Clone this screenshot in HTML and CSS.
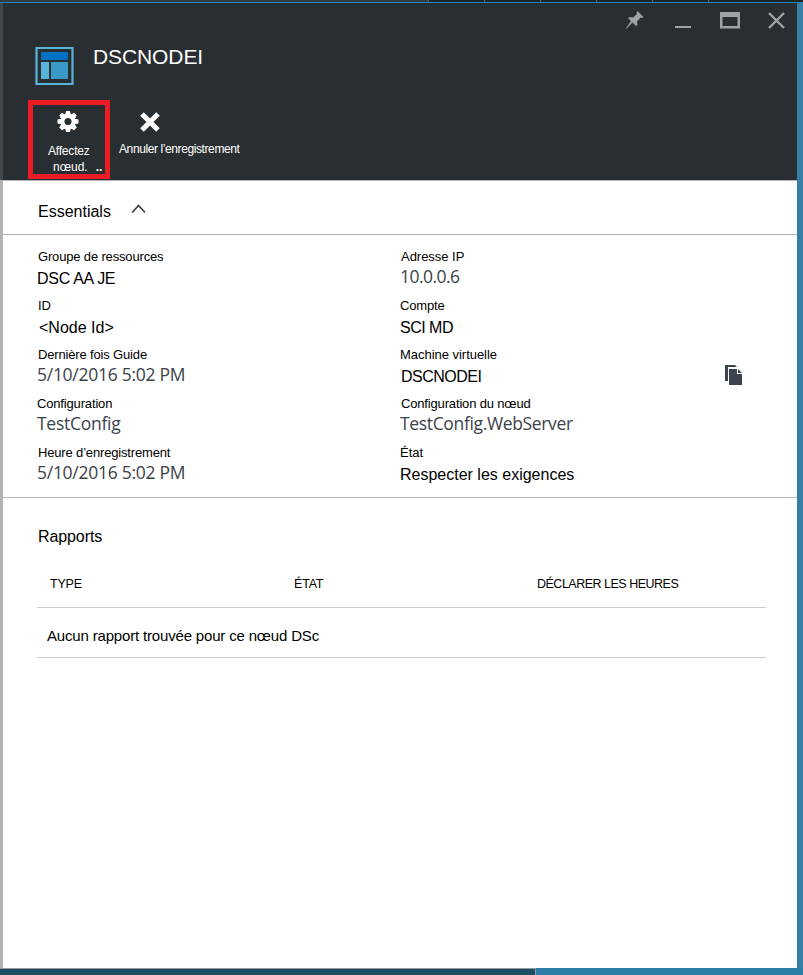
FILE: index.html
```html
<!DOCTYPE html>
<html lang="fr">
<head>
<meta charset="utf-8">
<title>DSCNODEI</title>
<link rel="stylesheet" href="styles.css">
</head>
<body>
<div class="topbar"><i class="tab wide"></i><i class="tab"></i><i class="tab"></i><i class="tab"></i><i class="tab"></i><i class="tab"></i></div>
<main class="blade">
  <header class="head">
    <div class="window-controls">
      <svg width="20" height="20" viewBox="0 0 20 20" fill="#a0a3a6"><path d="M12.500 1 18.500 7 17 8 15.500 7.500 12 11.500 12.500 15 11 16 7.500 12.500 1 19 .8 18.600 6 11 3 8 4.500 7 8 7.500 12 4 11.500 2.500Z"/></svg>
      <svg width="16" height="20" viewBox="0 0 16 20"><path d="M0 16h16v2H0z" fill="#a0a3a6"/></svg>
      <svg width="20" height="20" viewBox="0 0 20 20"><path fill="#a0a3a6" fill-rule="evenodd" d="M0 2h20v16.500H0zM2.500 7v9h15V7z"/></svg>
      <svg width="18" height="20" viewBox="0 0 18 20"><path d="M1 3 16 18M16 3 1 18" stroke="#a0a3a6" stroke-width="2.400"/></svg>
    </div>
    <div class="title-row">
      <svg class="logo" width="40" height="40" viewBox="0 0 40 40"><path d="M1.500 2h36v36h-36z" fill="none" stroke="#59b4d9" stroke-width="2.200"/><path fill="#0072c6" d="M6 6h27v8H6z"/><path fill="#59b4d9" d="M6 16h8v17H6z"/><path fill="#3999c6" d="M16 16h17v17H16z"/></svg>
      <h1>DSCNODEI</h1>
    </div>
    <div class="toolbar">
      <button class="command assign">
        <svg width="22" height="22" viewBox="-11 -11 22 22"><g fill="#fff"><path id="tooth" d="M-3-7-2-11H2L3-7V7L2 11H-2L-3 7Z"/><use href="#tooth" transform="rotate(45)"/><use href="#tooth" transform="rotate(90)"/><use href="#tooth" transform="rotate(135)"/><circle r="8"/></g><circle r="3.700" fill="#292e32"/></svg>
        <span>Affectez</span><span class="second">nœud.<b>..</b></span>
      </button>
      <button class="command remove">
        <svg width="20" height="20" viewBox="0 0 20 20"><path d="M2 2 18 18M18 2 2 18" stroke="#fff" stroke-width="5"/></svg>
        <span>Annuler l’enregistrement</span>
      </button>
    </div>
  </header>
  <section class="essentials-head"><h2>Essentials</h2>
    <svg width="16" height="10" viewBox="0 0 16 10"><path d="M1.200 8.500 7.500 1.500 14 8.500" fill="none" stroke="#3c424a" stroke-width="1.700"/></svg></section>
  <section class="essentials">
    <dl>
      <div><dt>Groupe de ressources</dt><dd class="out tight">DSC AA JE</dd></div>
      <div><dt>ID</dt><dd class="in">&lt;Node Id&gt;</dd></div>
      <div><dt>Dernière fois Guide</dt><dd class="soft">5/10/2016 5:02 PM</dd></div>
      <div><dt class="out">Configuration</dt><dd class="soft">TestConfig</dd></div>
      <div><dt>Heure d’enregistrement</dt><dd class="soft">5/10/2016 5:02 PM</dd></div>
    </dl>
    <dl>
      <div><dt class="wide">Adresse IP</dt><dd class="soft ip">10.0.0.6</dd></div>
      <div><dt class="out">Compte</dt><dd class="out tighter">SCI MD</dd></div>
      <div><dt class="out wide">Machine virtuelle</dt><dd class="tighter">DSCNODEI</dd></div>
      <div><dt>Configuration du nœud</dt><dd class="soft server">TestConfig.WebServer</dd></div>
      <div><dt class="out wide">État</dt><dd class="out">Respecter les exigences</dd></div>
    </dl>
    <svg class="copy" width="18" height="21" viewBox="0 0 18 21"><path fill="#3c424f" d="M0 0h10l2 2H3v14H0z"/><path fill="#3c424f" d="M4 4h8v5h5v11H4z"/><path fill="#3c424f" d="M13 4v4h4z"/></svg>
  </section>
  <section class="reports">
    <h2>Rapports</h2>
    <div class="thead"><span>TYPE</span><span>ÉTAT</span><span class="hours">DÉCLARER LES HEURES</span></div>
    <div class="empty">Aucun rapport trouvée pour ce nœud DSc</div>
  </section>
</main>
<footer class="bottombar"><i></i></footer>
</body>
</html>
```
FILE: styles.css
```css
* { box-sizing: border-box; }
body { margin: 0; height: 975px; overflow: hidden; display: flex; flex-direction: column; background: #3680a8; font-family: "Liberation Sans", Arial, sans-serif; color: #000; }
h1, h2, dl, dd, p { margin: 0; font-weight: 400; }
.topbar { height: 3px; flex: none; display: flex; background: #20252b; border-bottom: 1px solid #2387b8; }
.tab { width: 56px; border-right: 1px solid #555b60; }
.tab.wide { width: 429px; background: #343b40; }
.blade { width: 797px; height: 965px; border-left: 3px solid #b3b3b3; background: #fff; }
.head { height: 177px; margin-left: -3px; background: #292e32; border-left: 3px solid #42474b; }
.window-controls { height: 34px; padding: 7px 11px 0 0; display: flex; justify-content: flex-end; align-items: flex-start; }
.window-controls svg:nth-child(1) { margin-right: 30px; }
.window-controls svg:nth-child(2) { margin-right: 29px; }
.window-controls svg:nth-child(3) { margin-right: 28px; }
.title-row { height: 63px; padding: 9px 0 0 32px; display: flex; align-items: flex-start; gap: 18px; color: #fff; }
h1 { font-size: 21px; line-height: 24px; margin-top: -1px; letter-spacing: -.1px; }
.toolbar { display: flex; padding-left: 25px; }
.command { border: 0; background: none; color: #fff; font: 12px/16px "Liberation Sans", Arial, sans-serif; letter-spacing: -.2px; padding: 0; display: flex; flex-direction: column; align-items: flex-start; white-space: nowrap; }
.assign { width: 82px; height: 79px; border: 5px solid #ed1c24; padding: 6px 0 0 15px; }
.assign svg { margin: 0 0 10px 9px; }
.assign span { margin-top: 1px; margin-bottom: -1px; }
.second { display: flex; padding-left: 5px; letter-spacing: 0; }
.second b { margin-left: 8px; }
.remove { padding: 12px 0 0 9px; letter-spacing: -.4px; }
.remove svg { margin: 0 0 9px 21px; }
h2 { font-size: 16px; line-height: 20px; }
.essentials-head { height: 55px; border-top: 1px solid #b3b3b3; border-bottom: 1px solid #b3b3b3; padding: 20px 0 0 35px; display: flex; gap: 20px; }
.essentials-head h2 { padding-top: 1px; }
.essentials-head svg { margin-top: 3px; }
.essentials { height: 263px; border-bottom: 1px solid #b3b3b3; padding: 14px 0 0 35px; display: grid; grid-template-columns: 363px 324px 20px; }
dl > div { height: 49px; }
dt { font-size: 13px; line-height: 16px; letter-spacing: -.16px; }
dt.wide { letter-spacing: -.03px; }
dd { font-size: 16px; line-height: 20px; padding-top: 4px; white-space: nowrap; }
.out, .soft { margin-left: -1px; }
.in { margin-left: 1px; }
.tight { letter-spacing: -.3px; }
.tighter { letter-spacing: -.5px; }
.soft { font-family: "Open Sans", "Noto Sans", sans-serif; font-size: 17.5px; letter-spacing: -.27px; color: #3c424a; padding-top: 1px; }
.ip { letter-spacing: -.55px; }
.server { letter-spacing: -.35px; }
.copy { margin-top: 116px; }
.reports { padding: 29px 31px 0 34px; }
.reports h2 { padding-left: 1px; letter-spacing: -.1px; }
.thead { height: 53px; margin-top: 8px; padding: 21px 0 0 13px; border-bottom: 1px solid #ccc; display: grid; grid-template-columns: 244px 243px 1fr; font-size: 12.5px; line-height: 16px; letter-spacing: -.2px; }
.thead .hours { letter-spacing: -.5px; }
.empty { height: 50px; padding: 19px 0 0 10px; border-bottom: 1px solid #ccc; font-size: 15px; line-height: 18px; letter-spacing: -.17px; }
.bottombar { height: 7px; background: #2d7da9; }
.bottombar i { display: block; width: 536px; height: 7px; background: #1d4d63; border-top: 1px solid #999; border-right: 1px solid #999; }
```
